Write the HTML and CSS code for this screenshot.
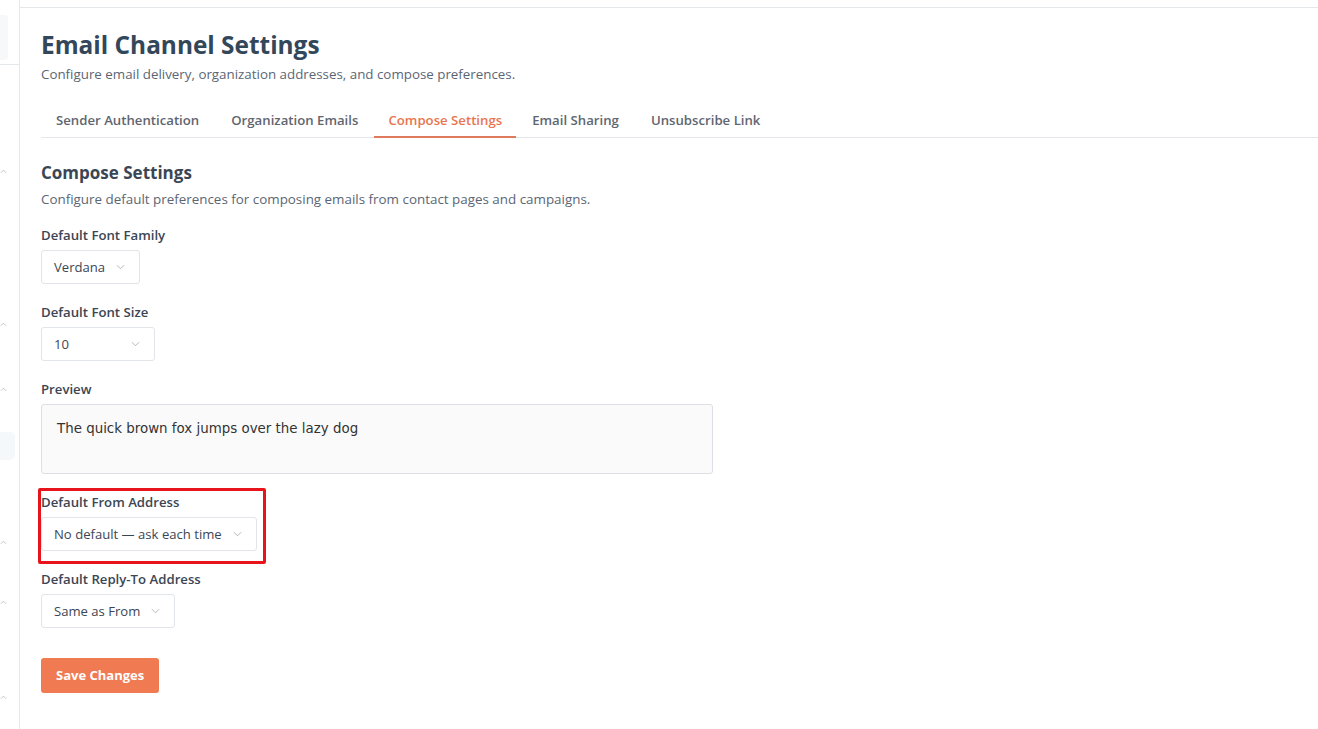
FILE: index.html
```html
<!DOCTYPE html>
<html lang="en">
<head>
    <meta charset="UTF-8">
    <meta name="viewport" content="width=device-width, initial-scale=1.0">
    <title>Email Channel Settings</title>
    <link rel="stylesheet" href="styles.css">
</head>
<body>

<div class="page">
    <aside class="sidebar">
        <div class="side-top"><div class="side-logo"></div></div>
        <svg class="side-caret caret-1" viewBox="0 0 8 5"><path d="M1 4l3-3 3 3"/></svg>
        <svg class="side-caret caret-2" viewBox="0 0 8 5"><path d="M1 4l3-3 3 3"/></svg>
        <svg class="side-caret caret-3" viewBox="0 0 8 5"><path d="M1 4l3-3 3 3"/></svg>
        <div class="side-active"></div>
        <svg class="side-caret caret-4" viewBox="0 0 8 5"><path d="M1 4l3-3 3 3"/></svg>
        <svg class="side-caret caret-5" viewBox="0 0 8 5"><path d="M1 4l3-3 3 3"/></svg>
        <svg class="side-caret caret-6" viewBox="0 0 8 5"><path d="M1 4l3-3 3 3"/></svg>
    </aside>

    <main class="main">
        <div class="topbar"></div>

        <div class="content">
            <h1 class="page-title">Email Channel Settings</h1>
            <p class="page-subtitle">Configure email delivery, organization addresses, and compose preferences.</p>

            <nav class="tabs">
                <a href="#" class="tab">Sender Authentication</a>
                <a href="#" class="tab">Organization Emails</a>
                <a href="#" class="tab active">Compose Settings</a>
                <a href="#" class="tab">Email Sharing</a>
                <a href="#" class="tab">Unsubscribe Link</a>
            </nav>

            <section class="compose">
                <h2 class="section-title">Compose Settings</h2>
                <p class="section-desc">Configure default preferences for composing emails from contact pages and campaigns.</p>

                <div class="field">
                    <label class="field-label">Default Font Family</label>
                    <div class="select">
                        <span>Verdana</span>
                        <svg class="chevron" viewBox="0 0 10 6"><path d="M1 1l4 4 4-4"/></svg>
                    </div>
                </div>

                <div class="field">
                    <label class="field-label">Default Font Size</label>
                    <div class="select select-size">
                        <span>10</span>
                        <svg class="chevron" viewBox="0 0 10 6"><path d="M1 1l4 4 4-4"/></svg>
                    </div>
                </div>

                <div class="field">
                    <label class="field-label">Preview</label>
                    <div class="preview">The quick brown fox jumps over the lazy dog</div>
                </div>

                <div class="field highlighted">
                    <label class="field-label">Default From Address</label>
                    <div class="select">
                        <span>No default — ask each time</span>
                        <svg class="chevron" viewBox="0 0 10 6"><path d="M1 1l4 4 4-4"/></svg>
                    </div>
                </div>

                <div class="field">
                    <label class="field-label">Default Reply-To Address</label>
                    <div class="select">
                        <span>Same as From</span>
                        <svg class="chevron" viewBox="0 0 10 6"><path d="M1 1l4 4 4-4"/></svg>
                    </div>
                </div>

                <a href="#" class="save-btn">Save Changes</a>
            </section>
        </div>
    </main>
</div>

</body>
</html>
```

FILE: styles.css
```css
body {
    margin: 0;
    font-family: "Open Sans", Lato, Arial, sans-serif;
    background: #fff;
    color: #33475b;
}
.page {
    display: flex;
    height: 729px;
    overflow: hidden;
}

/* clipped left nav */
.sidebar {
    width: 19px;
    flex-shrink: 0;
    border-right: 1px solid #e5e8eb;
    display: flex;
    flex-direction: column;
    overflow: hidden;
}
.side-top {
    height: 65px;
    border-bottom: 1px solid #e5e8eb;
    padding-top: 15px;
    box-sizing: border-box;
}
.side-logo {
    width: 8px;
    height: 45px;
    background: #f6f8fa;
    border-radius: 0 4px 4px 0;
}
.side-caret {
    width: 7px;
    height: 5px;
    flex-shrink: 0;
    fill: none;
    stroke: #b8bec6;
    stroke-width: 1;
}
.caret-1 { margin-top: 104px; }
.caret-2 { margin-top: 148px; }
.caret-3 { margin-top: 60px; }
.side-active {
    margin-top: 40px;
    height: 28px;
    width: 15px;
    background: #f5f8fa;
    border-radius: 0 5px 5px 0;
}
.caret-4 { margin-top: 80px; }
.caret-5 { margin-top: 55px; }
.caret-6 { margin-top: 90px; }

.main {
    flex: 1;
    display: flex;
    flex-direction: column;
}
.topbar {
    height: 7px;
    border-bottom: 1px solid #e5e8eb;
}
.content {
    padding: 21px 0 0 21px;
}
.page-title {
    margin: 0;
    font-size: 24.4px;
    line-height: 32px;
    font-weight: 700;
    color: #33475b;
}
.page-subtitle {
    margin: 4px 0 0;
    font-size: 13.35px;
    line-height: 18px;
    color: #5b6675;
}

.tabs {
    display: flex;
    margin-top: 16px;
    border-bottom: 1px solid #e3e6ea;
}
.tab {
    padding: 12px 16px 7px;
    font-size: 13.2px;
    line-height: 18px;
    font-weight: 600;
    color: #5f6670;
    text-decoration: none;
    border-bottom: 2px solid transparent;
    margin-bottom: -1px;
}
.tab:first-child {
    padding-left: 15px;
}
.tab.active {
    color: #e8764f;
    border-bottom-color: #df7a5c;
    padding-left: 14px;
    padding-right: 14px;
}

.compose {
    padding-top: 24px;
}
.section-title {
    margin: 0;
    font-size: 17px;
    line-height: 22px;
    font-weight: 700;
    color: #3b4654;
}
.section-desc {
    margin: 6px 0 0;
    font-size: 13.4px;
    line-height: 18px;
    color: #5b6675;
}
.field {
    margin-top: 18px;
    display: flex;
    flex-direction: column;
    align-items: flex-start;
}
.field + .field {
    margin-top: 19px;
}
.field-label {
    font-size: 13.2px;
    line-height: 18px;
    font-weight: 600;
    color: #3b4654;
    margin-bottom: 6px;
}
.select {
    display: flex;
    align-items: center;
    gap: 11px;
    height: 34px;
    box-sizing: border-box;
    padding: 0 14px 0 12px;
    border: 1px solid #e1e4e8;
    border-radius: 3px;
    background: #fff;
    font-size: 13.1px;
    color: #3b4654;
}
.select-size {
    width: 114px;
    justify-content: space-between;
}
.chevron {
    width: 9px;
    height: 6px;
    fill: none;
    stroke: #a8b0b9;
    stroke-width: 1;
}
.preview {
    width: 672px;
    height: 70px;
    box-sizing: border-box;
    padding: 16px 15px;
    background: #fafafa;
    border: 1px solid #dcdfe3;
    border-radius: 3px;
    font-family: "DejaVu Sans", Verdana, sans-serif;
    font-size: 13.4px;
    line-height: 16px;
    color: #333;
}

/* review highlight drawn around one field */
.highlighted {
    position: relative;
}
.highlighted::after {
    content: "";
    position: absolute;
    top: -5px;
    left: -3px;
    width: 222px;
    height: 70px;
    border: 3px solid #e8141b;
    border-radius: 2px;
}

.save-btn {
    display: inline-block;
    margin-top: 30px;
    padding: 0 15px;
    height: 35px;
    line-height: 35px;
    background: #f07a52;
    color: #fff;
    font-size: 13px;
    font-weight: 700;
    text-decoration: none;
    border-radius: 3px;
}
```
